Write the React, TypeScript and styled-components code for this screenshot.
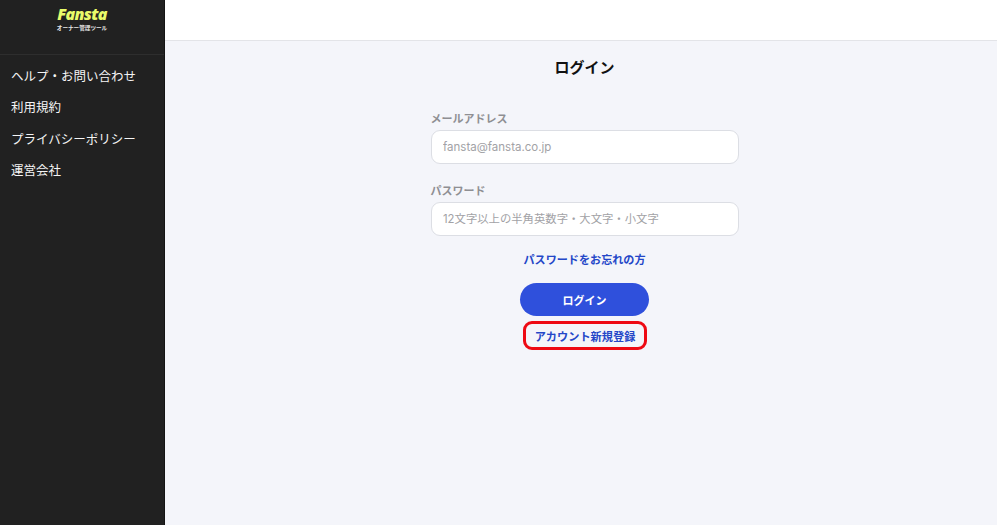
import React from "react";
import styled, { createGlobalStyle } from "styled-components";

const Global = createGlobalStyle`
  html, body { margin: 0; padding: 0; height: 100%; background: #fff; }
  body { font-family: "Inter", "Noto Sans CJK JP", sans-serif; }
  #root { height: 100%; }
  * { box-sizing: border-box; }
`;

const Page = styled.div`
  display: flex;
  width: 997px;
  height: 525px;
  overflow: hidden;
  background: #f4f5fa;
`;

const Sidebar = styled.aside`
  width: 165px;
  flex: none;
  background: #212121;
  border-right: 1px solid #141414;
  color: #fff;
`;

const Brand = styled.div`
  height: 55px;
  border-bottom: 1px solid #2e2e2e;
  display: flex;
  flex-direction: column;
  align-items: center;
  padding-top: 4px;
`;

const Logo = styled.div`
  font: italic 800 16px/20px "Open Sans", "Noto Sans CJK JP", sans-serif;
  letter-spacing: -0.7px;
  color: #e9fb6a;
`;

const BrandSub = styled.div`
  font: 700 5.6px/8px "Noto Sans CJK JP", sans-serif;
  color: #e8e8e8;
`;

const Nav = styled.nav`
  display: flex;
  flex-direction: column;
  padding: 5px 0 0 11px;
`;

const NavItem = styled.a`
  font: 400 12.5px/31.4px "Noto Sans CJK JP", sans-serif;
  color: #f5f5f5;
`;

const Main = styled.main`
  flex: 1;
  display: flex;
  flex-direction: column;
`;

const TopBar = styled.div`
  height: 41px;
  background: #fff;
  border-bottom: 1px solid #e3e4e8;
`;

const Content = styled.div`
  flex: 1;
  display: flex;
  flex-direction: column;
  align-items: center;
  padding-top: 14px;
  padding-left: 7px;
`;

const Title = styled.h1`
  margin: 0;
  font: 700 15px/24px "Noto Sans CJK JP", sans-serif;
  color: #111;
`;

const Form = styled.form`
  width: 308px;
  margin-top: 31px;
  display: flex;
  flex-direction: column;
  align-items: center;
`;

const Field = styled.div`
  width: 100%;
  margin-bottom: 18px;
`;

const Label = styled.label`
  display: block;
  font: 700 11px/16px "Noto Sans CJK JP", sans-serif;
  color: #8f8f93;
  margin-bottom: 4px;
`;

const Input = styled.input<{ $size: number }>`
  display: block;
  width: 100%;
  height: 34px;
  padding: 0 11.5px;
  border: 1.5px solid #dcdee4;
  border-radius: 9px;
  background: #fff;
  font: 400 ${(p) => p.$size}px "Inter", "Noto Sans CJK JP", sans-serif;
  outline: none;
  &::placeholder { color: #a2a2a6; opacity: 1; }
`;

const Forgot = styled.a`
  font: 700 11.1px/16px "Noto Sans CJK JP", sans-serif;
  color: #2447c8;
  margin-top: -3px;
`;

const Submit = styled.button`
  width: 129px;
  height: 33px;
  margin-top: 16px;
  border: none;
  border-radius: 17px;
  background: #2f50dc;
  color: #fff;
  font: 700 11px "Noto Sans CJK JP", sans-serif;
`;

const Register = styled.a`
  display: flex;
  align-items: center;
  justify-content: center;
  width: 124px;
  height: 29px;
  margin: 5px 0 0 1px;
  border: 3px solid #ee0a14;
  border-radius: 9px;
  font: 700 11.2px "Noto Sans CJK JP", sans-serif;
  color: #2447c8;
`;

export default function App() {
  return (
    <Page>
      <Global />
      <Sidebar>
        <Brand>
          <Logo>Fansta</Logo>
          <BrandSub>オーナー管理ツール</BrandSub>
        </Brand>
        <Nav>
          <NavItem>ヘルプ・お問い合わせ</NavItem>
          <NavItem>利用規約</NavItem>
          <NavItem>プライバシーポリシー</NavItem>
          <NavItem>運営会社</NavItem>
        </Nav>
      </Sidebar>
      <Main>
        <TopBar />
        <Content>
          <Title>ログイン</Title>
          <Form>
            <Field>
              <Label>メールアドレス</Label>
              <Input $size={11.5} placeholder="fansta@fansta.co.jp" />
            </Field>
            <Field>
              <Label>パスワード</Label>
              <Input $size={11.35} placeholder="12文字以上の半角英数字・大文字・小文字" />
            </Field>
            <Forgot>パスワードをお忘れの方</Forgot>
            <Submit type="button">ログイン</Submit>
            <Register>アカウント新規登録</Register>
          </Form>
        </Content>
      </Main>
    </Page>
  );
}
